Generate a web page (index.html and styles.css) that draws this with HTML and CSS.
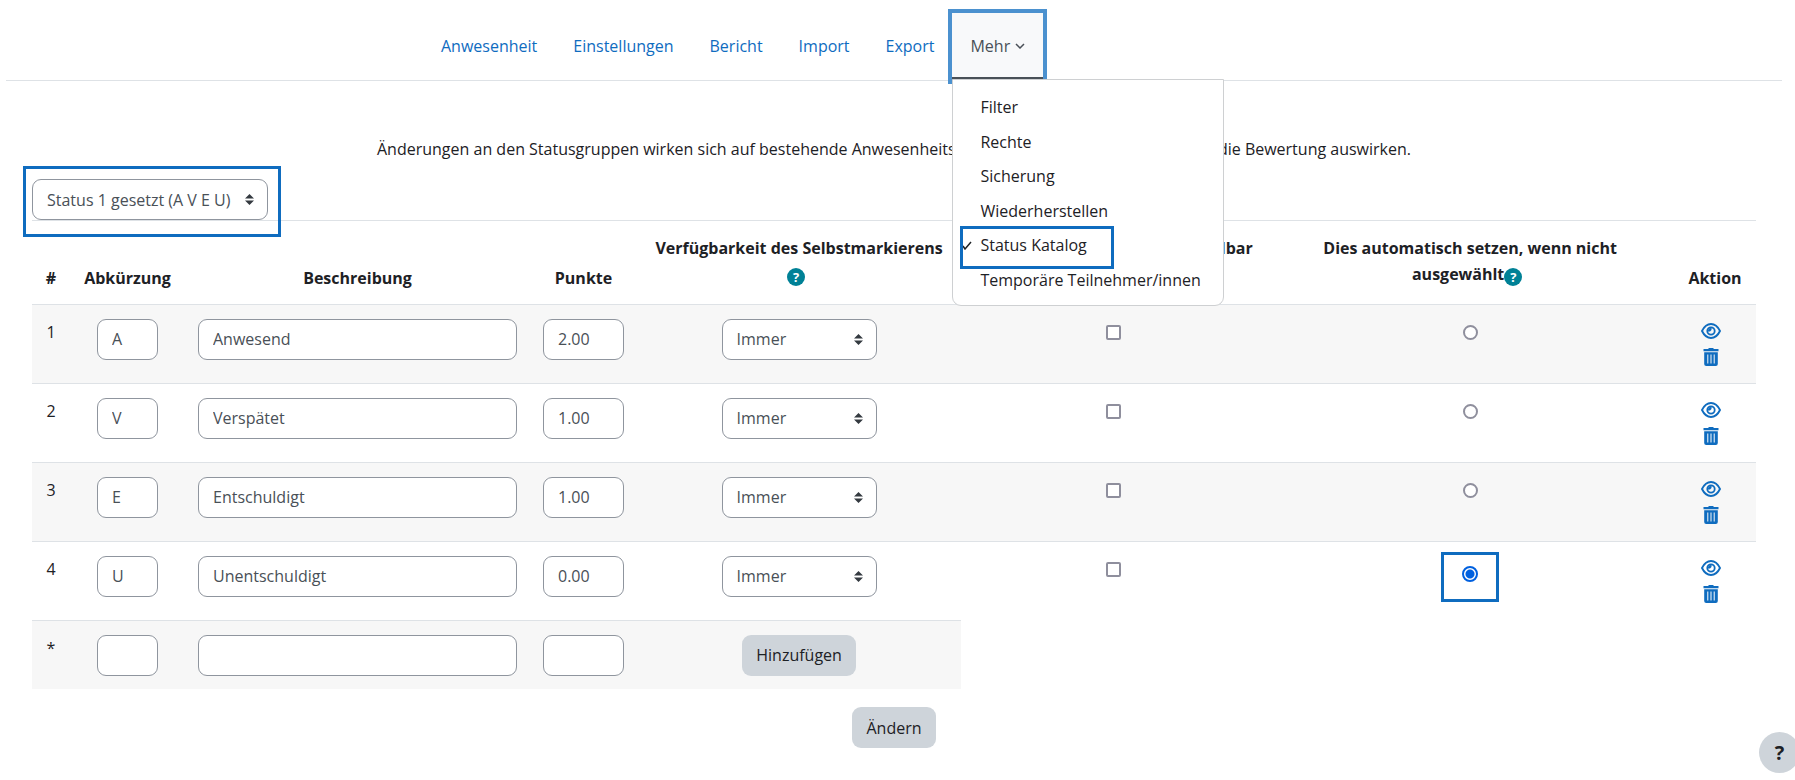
FILE: index.html
```html
<!DOCTYPE html>
<html lang="de">
<head>
<meta charset="utf-8">
<title>Status Katalog</title>
<link rel="stylesheet" href="styles.css">
</head>
<body>
<svg class="sprite" aria-hidden="true">
  <symbol id="updown" viewBox="0 0 10 12"><path d="M0 5 5 0l5 5zM0 7h10l-5 5z"/></symbol>
  <symbol id="eye" viewBox="0 0 20 16"><path fill="none" stroke="currentColor" stroke-width="1.900" d="M1 8C3.200 3.500 6.300 1 10 1s6.800 2.500 9 7c-2.200 4.500-5.300 7-9 7S3.200 12.500 1 8z"/><circle cx="10" cy="8" r="3.700" fill="none" stroke="currentColor" stroke-width="1.800"/><path d="M7 8.500A3 3 0 0 1 10.500 5v2l-1.500 1.500z" fill="currentColor"/></symbol>
  <symbol id="trash" viewBox="0 0 16 18"><path fill="currentColor" fill-rule="evenodd" d="M5 1l1-1h4l1 1h4.500v2.200H.5V1zM1.200 4.200h13.600V16a2 2 0 0 1-2 2H3.200a2 2 0 0 1-2-2zM4.300 6.500v9h1v-9zM7.500 6.500v9h1v-9zM10.700 6.500v9h1v-9z"/></symbol>
</svg>

<nav class="tabs" aria-label="Anwesenheit">
  <ul class="tabs-list">
    <li><a class="tab" href="#">Anwesenheit</a></li>
    <li><a class="tab" href="#">Einstellungen</a></li>
    <li><a class="tab" href="#">Bericht</a></li>
    <li><a class="tab" href="#">Import</a></li>
    <li><a class="tab" href="#">Export</a></li>
    <li class="more">
      <button class="tab tab-more" type="button" aria-expanded="true">Mehr
        <svg class="chevron" viewBox="0 0 10 6" aria-hidden="true"><path d="M1 1l4 4 4-4"/></svg>
      </button>
      <div class="menu">
        <a class="menu-item" href="#">Filter</a>
        <a class="menu-item" href="#">Rechte</a>
        <a class="menu-item" href="#">Sicherung</a>
        <a class="menu-item" href="#">Wiederherstellen</a>
        <a class="menu-item menu-item-current" href="#" aria-current="true"><svg class="check" viewBox="0 0 10 9" aria-hidden="true"><path d="M1 5l2 3 6-7"/></svg>Status Katalog</a>
        <a class="menu-item" href="#">Temporäre Teilnehmer/innen</a>
      </div>
    </li>
  </ul>
</nav>

<main class="content">
  <p class="notice">Änderungen an den Statusgruppen wirken sich auf bestehende Anwesenheitssitzungen aus und können sich auf die Bewertung auswirken.</p>
  <div class="picker">
    <span class="select">
      <select aria-label="Statusgruppe"><option>Status 1 gesetzt (A V E U)</option></select>
      <svg class="updown"><use href="#updown"/></svg>
    </span>
  </div>

  <form>
  <table class="statuses">
    <colgroup><col class="c-num"><col class="c-short"><col class="c-desc"><col class="c-points"><col class="c-avail"><col class="c-usable"><col class="c-auto"><col class="c-action"></colgroup>
    <thead>
      <tr>
        <th>#</th><th>Abkürzung</th><th>Beschreibung</th><th>Punkte</th>
        <th class="top">Verfügbarkeit des Selbstmarkierens <button class="help" type="button" aria-label="Hilfe">?</button></th>
        <th class="top">Beim Selbstmarkieren verwendbar</th>
        <th class="top">Dies automatisch setzen, wenn nicht ausgewählt<button class="help" type="button" aria-label="Hilfe">?</button></th>
        <th>Aktion</th>
      </tr>
    </thead>
    <tbody>
      <tr>
        <td>1</td>
        <td><input class="field short" value="A" aria-label="Abkürzung 1"></td>
        <td><input class="field" value="Anwesend" aria-label="Beschreibung 1"></td>
        <td><input class="field" value="2.00" aria-label="Punkte 1"></td>
        <td><span class="select wide"><select aria-label="Verfügbarkeit 1"><option>Immer</option></select><svg class="updown"><use href="#updown"/></svg></span></td>
        <td><input class="tick" type="checkbox" aria-label="Verwendbar 1"></td>
        <td><input class="tick radio" type="radio" name="auto" aria-label="Automatisch 1"></td>
        <td><div class="actions"><a href="#" aria-label="Verbergen"><svg class="eye"><use href="#eye"/></svg></a><a href="#" aria-label="Löschen"><svg class="trash"><use href="#trash"/></svg></a></div></td>
      </tr>
      <tr>
        <td>2</td>
        <td><input class="field short" value="V" aria-label="Abkürzung 2"></td>
        <td><input class="field" value="Verspätet" aria-label="Beschreibung 2"></td>
        <td><input class="field" value="1.00" aria-label="Punkte 2"></td>
        <td><span class="select wide"><select aria-label="Verfügbarkeit 2"><option>Immer</option></select><svg class="updown"><use href="#updown"/></svg></span></td>
        <td><input class="tick" type="checkbox" aria-label="Verwendbar 2"></td>
        <td><input class="tick radio" type="radio" name="auto" aria-label="Automatisch 2"></td>
        <td><div class="actions"><a href="#" aria-label="Verbergen"><svg class="eye"><use href="#eye"/></svg></a><a href="#" aria-label="Löschen"><svg class="trash"><use href="#trash"/></svg></a></div></td>
      </tr>
      <tr>
        <td>3</td>
        <td><input class="field short" value="E" aria-label="Abkürzung 3"></td>
        <td><input class="field" value="Entschuldigt" aria-label="Beschreibung 3"></td>
        <td><input class="field" value="1.00" aria-label="Punkte 3"></td>
        <td><span class="select wide"><select aria-label="Verfügbarkeit 3"><option>Immer</option></select><svg class="updown"><use href="#updown"/></svg></span></td>
        <td><input class="tick" type="checkbox" aria-label="Verwendbar 3"></td>
        <td><input class="tick radio" type="radio" name="auto" aria-label="Automatisch 3"></td>
        <td><div class="actions"><a href="#" aria-label="Verbergen"><svg class="eye"><use href="#eye"/></svg></a><a href="#" aria-label="Löschen"><svg class="trash"><use href="#trash"/></svg></a></div></td>
      </tr>
      <tr>
        <td>4</td>
        <td><input class="field short" value="U" aria-label="Abkürzung 4"></td>
        <td><input class="field" value="Unentschuldigt" aria-label="Beschreibung 4"></td>
        <td><input class="field" value="0.00" aria-label="Punkte 4"></td>
        <td><span class="select wide"><select aria-label="Verfügbarkeit 4"><option>Immer</option></select><svg class="updown"><use href="#updown"/></svg></span></td>
        <td><input class="tick" type="checkbox" aria-label="Verwendbar 4"></td>
        <td class="marked-cell"><span class="marked"><input class="tick radio" type="radio" name="auto" aria-label="Automatisch 4" checked></span></td>
        <td><div class="actions"><a href="#" aria-label="Verbergen"><svg class="eye"><use href="#eye"/></svg></a><a href="#" aria-label="Löschen"><svg class="trash"><use href="#trash"/></svg></a></div></td>
      </tr>
      <tr class="new">
        <td>*</td>
        <td><input class="field short" aria-label="Neue Abkürzung"></td>
        <td><input class="field" aria-label="Neue Beschreibung"></td>
        <td><input class="field" aria-label="Neue Punkte"></td>
        <td><button class="btn" type="button">Hinzufügen</button></td>
      </tr>
    </tbody>
  </table>
  <div class="submit"><button class="btn" type="button">Ändern</button></div>
  </form>
</main>
<button class="help-fab" type="button" aria-label="Hilfe">?</button>
</body>
</html>
```
FILE: styles.css
```css
*, *::after { box-sizing: border-box; }
body {
  margin: 0;
  background: #fff;
  color: #1d2125;
  font: 16px/26px "Open Sans", "Noto Sans", sans-serif;
  overflow-x: hidden;
}
a { color: #0f6cbf; text-decoration: none; }
button, input, select { font: inherit; color: inherit; margin: 0; }
.sprite { display: none; }

.tabs { margin: 0 13px 0 6px; padding-top: 13px; border-bottom: 1px solid #dee2e6; }
.tabs-list { display: flex; margin: 0 0 0 calc(50% - 471px); padding: 0; list-style: none; }
.tabs-list li { display: flex; }
.tab { display: flex; align-items: center; height: 67px; padding: 0 18px 2px; }
.more { position: relative; }
.tab-more {
  gap: 5px;
  border: 0;
  border-top: 3px solid transparent;
  border-bottom: 3px solid #495057;
  background: #f8f9fa;
  color: #495057;
  outline: 4px solid #4b91cf;
}
.chevron { width: 10px; height: 6px; fill: none; stroke: currentColor; stroke-width: 1.5; }
.menu {
  position: absolute;
  top: 66px;
  left: 0;
  z-index: 5;
  padding: 10px 0 8px;
  border: 1px solid #ced0d2;
  border-radius: 0 0 9px 9px;
  background: #fff;
}
.menu-item { position: relative; display: block; padding: 4px 22px 4px 27px; color: #1d2125; white-space: nowrap; line-height: 26px; }
.menu-item:nth-child(odd) { padding-bottom: 5px; }
.menu-item-current::after {
  content: "";
  position: absolute;
  top: -2px;
  bottom: -6px;
  left: 7px;
  width: 154px;
  border: 3px solid #0f6cbf;
}
.check { position: absolute; left: 9px; top: 13px; width: 10px; height: 9px; fill: none; stroke: currentColor; stroke-width: 1.5; }

.content { padding: 0 39px 0 32px; }
.notice { margin: 55px 0 0; text-align: center; }
.picker { display: flex; margin-top: 17px; border-bottom: 1px solid #dee2e6; }
.select { position: relative; display: inline-flex; }
.select select {
  appearance: none;
  width: 100%;
  height: 41px;
  padding: 0 36px 0 14px;
  border: 1px solid #8f959e;
  border-radius: 9px;
  background: #fff;
  color: #495057;
}
.wide { width: 155px; vertical-align: top; }
.picker .select::after {
  content: "";
  position: absolute;
  inset: -13px -13px -17px -9px;
  border: 3px solid #0f6cbf;
  pointer-events: none;
}
.updown { position: absolute; right: 14px; top: 15px; width: 9px; height: 11px; fill: #343a40; pointer-events: none; }

.statuses { width: 100%; table-layout: fixed; border-collapse: collapse; }
.c-num { width: 38px; }
.c-short { width: 115px; }
.c-desc { width: 345px; }
.c-points { width: 107px; }
.c-avail { width: 18.8%; }
.c-usable { width: 17.7%; }
.c-action { width: 82px; }
th { height: 83px; padding: 0 13px 13px; vertical-align: bottom; }
th.top { padding-top: 14px; vertical-align: top; }
th:first-child { padding-left: 0; padding-right: 0; }
td { height: 79px; padding: 14px 13px 0; border-top: 1px solid #dee2e6; text-align: center; vertical-align: top; }
td:first-child { padding-left: 0; padding-right: 0; }
tbody tr:nth-child(odd) td { background: #f7f7f7; }
.new td { height: 69px; }
.field {
  width: 100%;
  height: 41px;
  padding: 0 14px;
  border: 1px solid #8f959e;
  border-radius: 9px;
  background: #fff;
  color: #495057;
  vertical-align: top;
}
.short { width: 61px; }
.help {
  width: 18px;
  height: 18px;
  margin-right: 6px;
  padding: 0;
  border: 0;
  border-radius: 50%;
  background: #008196;
  color: #fff;
  font-size: 13px;
  font-weight: 700;
  line-height: 18px;
  vertical-align: -2px;
}
.tick {
  appearance: none;
  display: inline-block;
  width: 15px;
  height: 15px;
  margin-top: 6px;
  border: 2px solid #8f8f9d;
  border-radius: 2px;
  background: #fff;
  vertical-align: top;
}
.radio { border-radius: 50%; }
.radio:checked { width: 16px; height: 16px; margin: 0; border-color: #0060df; background: radial-gradient(circle, #0060df 4px, #fff 5px); }
td.marked-cell { padding-top: 10px; }
.marked { display: inline-block; padding: 11px 18px 17px; border: 3px solid #0f6cbf; line-height: 16px; font-size: 0; vertical-align: top; }
.actions { display: flex; flex-direction: column; align-items: center; gap: 9px; padding: 4px 8px 0 0; }
.actions a { display: flex; }
.eye { width: 20px; height: 16px; }
.trash { width: 16px; height: 18px; }
.btn { height: 41px; padding: 0 14px; border: 0; border-radius: 9px; background: #ced4da; vertical-align: top; }
.submit { display: flex; justify-content: center; padding: 18px 0 0; }
.help-fab {
  position: fixed;
  right: -5px;
  bottom: 7px;
  width: 41px;
  height: 41px;
  padding: 0;
  border: 0;
  border-radius: 50%;
  background: #ced4da;
  font-size: 20px;
  font-weight: 700;
}
```
